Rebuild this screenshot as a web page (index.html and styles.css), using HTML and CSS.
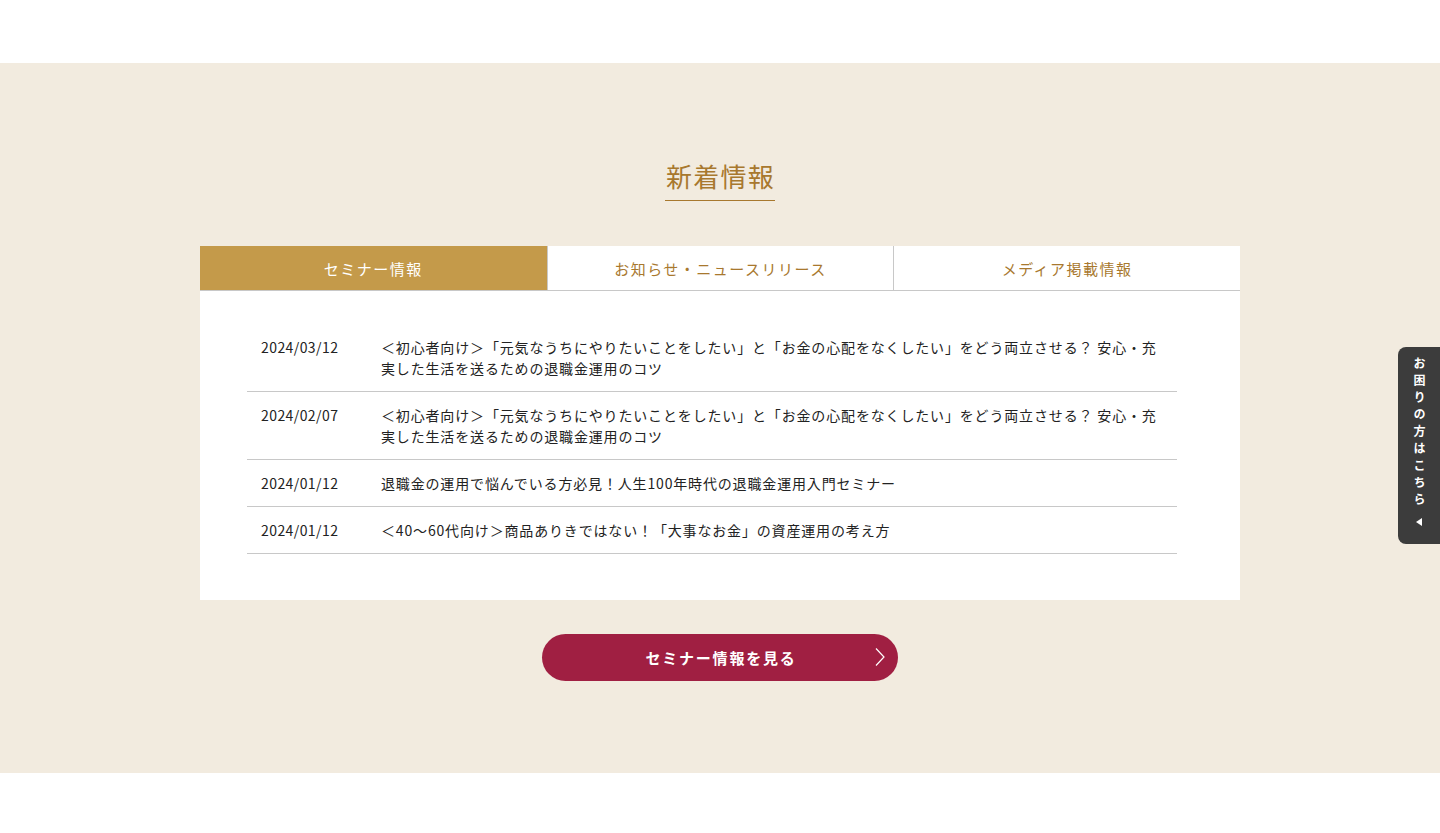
FILE: index.html
```html
<!DOCTYPE html>
<html lang="ja">
<head>
<meta charset="utf-8">
<title>新着情報</title>
<link rel="stylesheet" href="styles.css">
</head>
<body>
<header class="top"></header>
<section class="news">
  <div class="news-head">
    <h2 class="news-title">新着情報</h2>
  </div>
  <div class="panel">
    <div class="tabs">
      <div class="tab is-active">セミナー情報</div>
      <div class="tab">お知らせ・ニュースリリース</div>
      <div class="tab">メディア掲載情報</div>
    </div>
    <div class="list-wrap">
      <ul class="list">
        <li class="row"><span class="date">2024/03/12</span><span class="ttl">＜初心者向け＞「元気なうちにやりたいことをしたい」と「お金の心配をなくしたい」をどう両立させる？ 安心・充実した生活を送るための退職金運用のコツ</span></li>
        <li class="row"><span class="date">2024/02/07</span><span class="ttl">＜初心者向け＞「元気なうちにやりたいことをしたい」と「お金の心配をなくしたい」をどう両立させる？ 安心・充実した生活を送るための退職金運用のコツ</span></li>
        <li class="row"><span class="date">2024/01/12</span><span class="ttl">退職金の運用で悩んでいる方必見！人生100年時代の退職金運用入門セミナー</span></li>
        <li class="row"><span class="date">2024/01/12</span><span class="ttl">＜40～60代向け＞商品ありきではない！「大事なお金」の資産運用の考え方</span></li>
      </ul>
    </div>
  </div>
  <div class="more">
    <a class="more-btn" href="#"><span class="more-label">セミナー情報を見る</span><svg class="more-arrow" width="12" height="20" viewBox="0 0 12 20"><path d="M2 1.5 L10 10 L2 18.5" fill="none" stroke="#fff" stroke-width="1.2"/></svg></a>
  </div>
</section>
<footer class="bottom"></footer>
<a class="side-tab" href="#"><span class="side-text">お困りの方はこちら</span><span class="side-tri"></span></a>
</body>
</html>
```
FILE: styles.css
```css
* { box-sizing: border-box; }
html, body { margin: 0; padding: 0; }
body {
  font-family: "Noto Sans CJK JP", "Noto Sans", sans-serif;
  color: #222;
  background: #fff;
}
.top { height: 63px; background: #fff; }
.bottom { height: 60px; background: #fff; }
.news {
  background: #f2ebdf;
  padding: 93px 0 92px;
}
.news-head { display: flex; justify-content: center; }
.news-title {
  margin: 0;
  font-size: 26px;
  font-weight: 400;
  line-height: 39px;
  letter-spacing: 0.05em;
  color: #a8782e;
  padding: 0 0 5px 1px;
  border-bottom: 1px solid #a8782e;
}
.panel {
  width: 1040px;
  margin: 45px auto 0;
  background: #fff;
}
.tabs {
  display: grid;
  grid-template-columns: 1fr 1fr 1fr;
  border-bottom: 1px solid #c8c8c8;
}
.tab {
  height: 44px;
  display: flex;
  align-items: center;
  justify-content: center;
  font-size: 15px;
  letter-spacing: 0.1em;
  color: #a8782e;
  background: #fff;
  border-left: 1px solid #c8c8c8;
}
.tab.is-active {
  background: #c49a4a;
  color: #fff;
  border-left: 0;
}
.list-wrap { padding: 33px 63px 46px 47px; }
.list { list-style: none; margin: 0; padding: 0; }
.row {
  display: flex;
  padding: 13px 14px 12px;
  border-bottom: 1px solid #c8c8c8;
  font-size: 14px;
  line-height: 21px;
  letter-spacing: 0.06em;
}
.date { flex: 0 0 120px; letter-spacing: 0.03em; }
.ttl { flex: 1; }
.more { display: flex; justify-content: center; margin-top: 34px; }
.more-btn {
  position: relative;
  width: 356px;
  height: 47px;
  border-radius: 24px;
  background: #a01f42;
  color: #fff;
  text-decoration: none;
  display: flex;
  align-items: center;
  justify-content: center;
  font-size: 15px;
  font-weight: 700;
  letter-spacing: 0.12em;
}
.more-label { padding-left: 2px; }
.more-arrow { position: absolute; right: 12px; top: 13px; }
.side-tab {
  position: fixed;
  right: 0;
  top: 347px;
  width: 42px;
  height: 197px;
  background: #3c3c3c;
  border-radius: 8px 0 0 8px;
  display: flex;
  flex-direction: column;
  align-items: center;
  padding-top: 10px;
  text-decoration: none;
}
.side-text {
  writing-mode: vertical-rl;
  color: #fff;
  font-size: 12px;
  font-weight: 700;
  letter-spacing: 5px;
  line-height: 1;
}
.side-tri {
  margin-top: 8px;
  width: 0;
  height: 0;
  border-top: 4.5px solid transparent;
  border-bottom: 4.5px solid transparent;
  border-right: 6px solid #fff;
}
```
